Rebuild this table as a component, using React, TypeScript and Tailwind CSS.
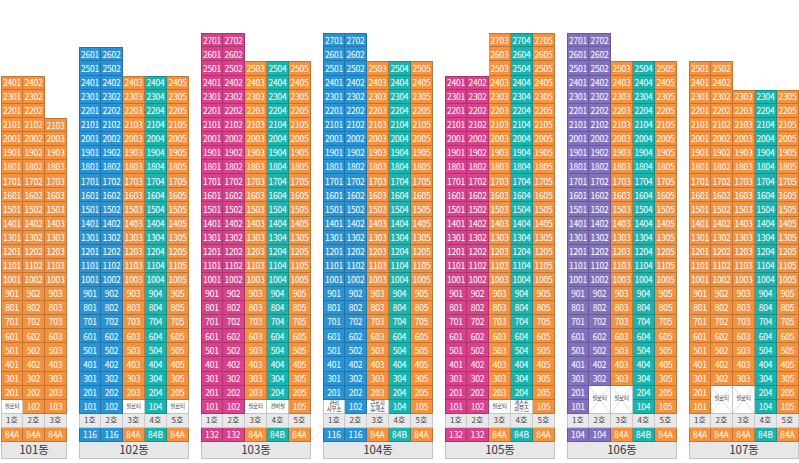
type ColorKey = 'o' | 'b' | 'p' | 't' | 'v'

// fill colours per unit type group
const BG: Record<ColorKey, string> = {
  o: 'bg-[#f3923f]',
  b: 'bg-[#2b93d4]',
  p: 'bg-[#d8428a]',
  t: 'bg-[#1db3ac]',
  v: 'bg-[#8371bd]',
}

interface Column {
  color: ColorKey
  top: number
  ground?: string // white cell on the 1st floor
  pilotis?: boolean // crossed 필로티 over floors 1-2
  type: string
  typeColor: ColorKey
}

interface Building {
  name: string
  cols: Column[]
}

const BUILDINGS: Building[] = [
  {
    name: '101동',
    cols: [
      { color: 'o', top: 24, ground: '필로티', type: '84A', typeColor: 'o' },
      { color: 'o', top: 24, type: '84A', typeColor: 'o' },
      { color: 'o', top: 21, type: '84A', typeColor: 'o' },
    ],
  },
  {
    name: '102동',
    cols: [
      { color: 'b', top: 26, type: '116', typeColor: 'b' },
      { color: 'b', top: 26, type: '116', typeColor: 'b' },
      { color: 'o', top: 24, ground: '필로티', type: '84A', typeColor: 'o' },
      { color: 't', top: 24, type: '84B', typeColor: 't' },
      { color: 'o', top: 24, ground: '필로티', type: '84A', typeColor: 'o' },
    ],
  },
  {
    name: '103동',
    cols: [
      { color: 'p', top: 27, type: '132', typeColor: 'p' },
      { color: 'p', top: 27, type: '132', typeColor: 'p' },
      { color: 'o', top: 25, ground: '필로티', type: '84A', typeColor: 'o' },
      { color: 't', top: 25, ground: '경비실', type: '84B', typeColor: 't' },
      { color: 'o', top: 25, type: '84A', typeColor: 'o' },
    ],
  },
  {
    name: '104동',
    cols: [
      { color: 'b', top: 27, ground: '관리\n사무소', type: '116', typeColor: 'b' },
      { color: 'b', top: 27, type: '116', typeColor: 'b' },
      { color: 'o', top: 25, ground: '근로자\n휴게소', type: '84A', typeColor: 'o' },
      { color: 't', top: 25, type: '84B', typeColor: 't' },
      { color: 'o', top: 25, type: '84A', typeColor: 'o' },
    ],
  },
  {
    name: '105동',
    cols: [
      { color: 'p', top: 24, type: '132', typeColor: 'p' },
      { color: 'p', top: 24, type: '132', typeColor: 'p' },
      { color: 'o', top: 27, ground: '필로티', type: '84A', typeColor: 'o' },
      { color: 't', top: 27, ground: '게스트\n하우스', type: '84B', typeColor: 't' },
      { color: 'o', top: 27, type: '84A', typeColor: 'o' },
    ],
  },
  {
    name: '106동',
    cols: [
      { color: 'v', top: 27, type: '104', typeColor: 'v' },
      { color: 'v', top: 27, pilotis: true, type: '104', typeColor: 'v' },
      { color: 'o', top: 25, pilotis: true, type: '84A', typeColor: 'o' },
      { color: 't', top: 25, type: '84B', typeColor: 't' },
      { color: 'o', top: 25, type: '84A', typeColor: 'o' },
    ],
  },
  {
    name: '107동',
    cols: [
      { color: 'o', top: 25, type: '84A', typeColor: 'o' },
      { color: 'o', top: 25, pilotis: true, type: '84A', typeColor: 'o' },
      { color: 'o', top: 23, pilotis: true, type: '84A', typeColor: 'o' },
      { color: 't', top: 23, type: '84B', typeColor: 't' },
      { color: 'o', top: 23, type: '84A', typeColor: 'o' },
    ],
  },
]

function UnitColumn({ col, index }: { col: Column; index: number }) {
  const lowest = col.pilotis ? 3 : col.ground ? 2 : 1
  const floors: number[] = []
  for (let f = col.top; f >= lowest; f--) floors.push(f)
  const suffix = String(index + 1).padStart(2, '0')
  const left = index === 0 ? 'border-l' : ''

  return (
    <div className="flex flex-col">
      {floors.map((f, i) => (
        <div
          key={f}
          className={`flex h-[14.1px] w-[22px] items-center justify-center border-r border-b border-black/20 text-[8.5px] leading-none tracking-[-0.2px] text-white ${BG[col.color]} ${left} ${i === 0 ? 'border-t' : ''}`}
        >
          {f}
          {suffix}
        </div>
      ))}
      {col.ground && (
        <div
          className={`flex h-[14.1px] w-[22px] items-center justify-center whitespace-pre-line border-r border-b border-[#c4c4c4] bg-white text-center text-[5.5px] leading-[6px] tracking-[-0.3px] text-[#333] ${left}`}
        >
          {col.ground}
        </div>
      )}
      {col.pilotis && (
        <div className="relative flex h-[28.2px] w-[22px] items-center justify-center border-r border-b border-[#c4c4c4] bg-white">
          <svg className="absolute inset-0 h-full w-full" preserveAspectRatio="none" viewBox="0 0 22 28">
            <line x1="0" y1="0" x2="22" y2="28" stroke="#d4d4d4" strokeWidth="0.8" />
            <line x1="22" y1="0" x2="0" y2="28" stroke="#d4d4d4" strokeWidth="0.8" />
          </svg>
          <span className="relative text-[5.5px] leading-none tracking-[-0.3px] text-[#333]">필로티</span>
        </div>
      )}
    </div>
  )
}

function BuildingBlock({ building }: { building: Building }) {
  return (
    <div className="flex flex-col">
      <div className="flex items-end">
        {building.cols.map((col, i) => (
          <UnitColumn key={i} col={col} index={i} />
        ))}
      </div>
      <div className="flex">
        {building.cols.map((_, i) => (
          <div
            key={i}
            className={`flex h-[14.1px] w-[22px] items-center justify-center border-r border-b border-[#c9c9c9] bg-[#e9e9e9] text-[8px] leading-none text-[#444] ${i === 0 ? 'border-l' : ''}`}
          >
            {i + 1}호
          </div>
        ))}
      </div>
      <div className="flex">
        {building.cols.map((col, i) => (
          <div
            key={i}
            className={`flex h-[14.1px] w-[22px] items-center justify-center border-r border-b border-black/20 text-[8.5px] leading-none text-white ${BG[col.typeColor]} ${i === 0 ? 'border-l' : ''}`}
          >
            {col.type}
          </div>
        ))}
      </div>
      <div className="flex h-[17px] items-center justify-center border border-t-0 border-[#c3c3c3] bg-[#e6e7e9] text-[11.5px] leading-none text-[#333]">
        {building.name}
      </div>
    </div>
  )
}

export default function App() {
  return (
    <div className="flex h-[463px] w-[799px] items-end gap-[12px] bg-white pb-[4px] pl-[1px] font-['Noto_Sans_CJK_KR',sans-serif]">
      {BUILDINGS.map((b) => (
        <BuildingBlock key={b.name} building={b} />
      ))}
    </div>
  )
}
